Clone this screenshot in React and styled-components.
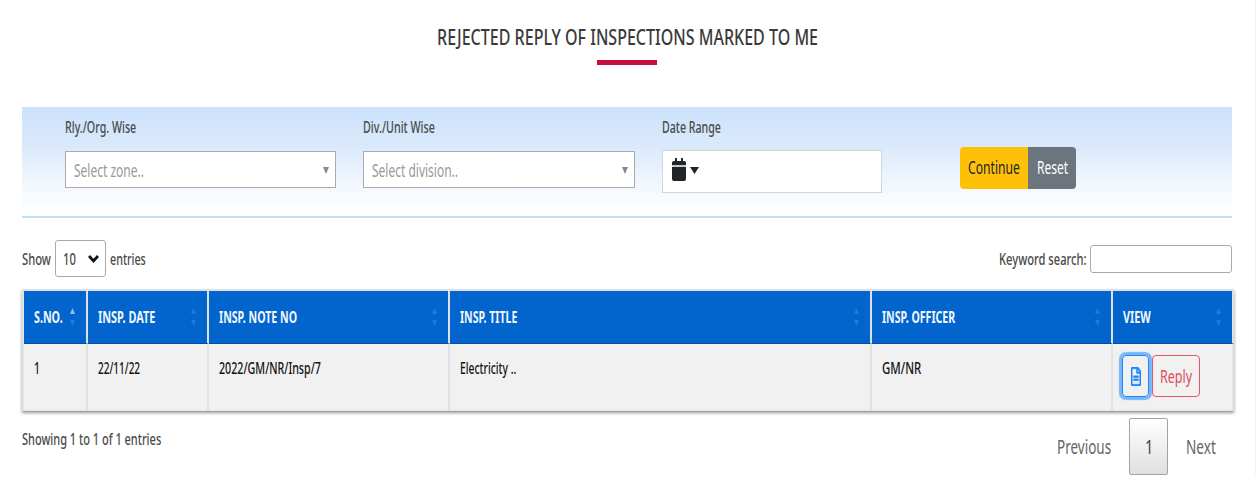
import React, { useLayoutEffect, useRef, useState } from "react";
import styled, { createGlobalStyle } from "styled-components";
import { FaCalendar, FaRegFileAlt } from "react-icons/fa";

const Global = createGlobalStyle`
  *, *::before, *::after { box-sizing: border-box; }
  body {
    margin: 0;
    background: #fff;
    font-family: "Noto Sans", "Open Sans", sans-serif;
  }
  button { font-family: inherit; padding: 0; cursor: pointer; }
`;

/* Condensed text: the glyphs are scaled to fill a fixed width. */
const TextBox = styled.span`
  display: inline-block;
  flex: none;
  width: ${(p) => p.$width}px;
  height: ${(p) => p.$size + 6}px;
  line-height: ${(p) => p.$size + 6}px;
  font-size: ${(p) => p.$size}px;
  font-weight: ${(p) => p.$weight};
  color: ${(p) => p.$color};
  white-space: nowrap;
  text-align: left;
`;
const TextInk = styled.span`
  display: inline-block;
  transform-origin: 0 50%;
`;

function Text({ width, size = 15.5, weight = 500, color = "#4a4a4a", children }) {
  const ref = useRef(null);
  const [scale, setScale] = useState(1);
  useLayoutEffect(() => {
    setScale(width / ref.current.offsetWidth);
  }, [width, size, weight, children]);
  return (
    <TextBox $width={width} $size={size} $weight={weight} $color={color}>
      <TextInk ref={ref} style={{ transform: `scaleX(${scale})` }}>
        {children}
      </TextInk>
    </TextBox>
  );
}

const Page = styled.main`
  width: 1256px;
  height: 475px;
  padding: 22px 21px 0 22px;
  border-right: 1px solid #f4f4f4;
`;
const Heading = styled.h1`
  margin: 0;
  height: 85px;
  width: 1210px;
  display: flex;
  flex-direction: column;
  align-items: center;
  font-size: 22px;
  line-height: 0;
  &::after {
    content: "";
    width: 60px;
    height: 5px;
    margin-top: 10px;
    background: #c60f3c;
  }
`;
const Filters = styled.section`
  width: 1210px;
  height: 111px;
  display: flex;
  align-items: flex-start;
  padding: 10px 0 0 43px;
  border-bottom: 2px solid #c2e1f7;
  background: linear-gradient(#cce2fd 0%, #dbeafb 38%, #f3f8fe 72%, #fff 100%);
`;
const Field = styled.div`
  width: ${(p) => p.$width}px;
  margin-right: ${(p) => p.$gap}px;
  display: flex;
  flex-direction: column;
  gap: ${(p) => p.$space}px;
`;
const SelectBox = styled.div`
  height: 37px;
  display: flex;
  align-items: center;
  justify-content: space-between;
  padding: 2px 6px 0 8px;
  background: #fff;
  border: 1.5px solid #aaa;
`;
const DateBox = styled.div`
  height: 43px;
  display: flex;
  align-items: flex-start;
  gap: 4px;
  padding: 7px 9px;
  background: #fff;
  border: 1px solid #d3d6d9;
`;
const CalendarIcon = styled(FaCalendar)`
  width: 14px;
  height: 23px;
  color: #212529;
`;
const Triangle = styled.svg`
  display: block;
  flex: none;
  width: ${(p) => p.$w}px;
  height: ${(p) => p.$h}px;
  margin-top: ${(p) => p.$top || 0}px;
  fill: ${(p) => p.$color};
`;
const Down = (props) => (
  <Triangle viewBox="0 0 10 10" preserveAspectRatio="none" {...props}>
    <path d="M0 0h10L5 10z" />
  </Triangle>
);
const Up = (props) => (
  <Triangle viewBox="0 0 10 10" preserveAspectRatio="none" {...props}>
    <path d="M0 10h10L5 0z" />
  </Triangle>
);
const ButtonGroup = styled.div`
  display: flex;
  margin: 30px 0 0 0;
  border-radius: 4px;
  overflow: hidden;
`;
const Action = styled.button`
  width: ${(p) => p.$width}px;
  height: 42px;
  border: 0;
  display: flex;
  align-items: center;
  justify-content: center;
  background: ${(p) => p.$bg};
`;

const Toolbar = styled.div`
  width: 1210px;
  height: 71px;
  display: flex;
  justify-content: space-between;
  padding-top: 22px;
`;
const ToolGroup = styled.label`
  height: 37px;
  display: flex;
  align-items: center;
  gap: ${(p) => p.$gap}px;
  ${TextBox} { margin-top: 2px; }
`;
const LengthSelect = styled.span`
  width: 51px;
  height: 37px;
  display: flex;
  align-items: center;
  justify-content: space-between;
  padding: 0 6px 0 7px;
  border: 1px solid #aaa;
  border-radius: 3px;
  background: #fff;
`;
const Chevron = styled.svg`
  width: 11px;
  height: 10px;
  fill: none;
  stroke: #111;
  stroke-width: 2.8;
`;
const SearchInput = styled.input`
  width: 142px;
  height: 28px;
  padding: 0 4px;
  border: 1px solid #aaa;
  border-radius: 3px;
  background: #fff;
`;

const Table = styled.div`
  width: 1212px;
  height: 122px;
  border: solid #dee2e6;
  border-width: 2px 0 1px 2px;
  box-shadow: 0 2px 3px rgba(0, 0, 0, 0.42);
`;
const Row = styled.div`
  display: grid;
  grid-template-columns: 64px 121px 241px 422px 241px 121px;
`;
const HeadCell = styled.div`
  height: 53px;
  display: flex;
  align-items: center;
  justify-content: space-between;
  padding: 1px 11px 0 10px;
  background: #0165cd;
  border-right: 2px solid #dee2e6;
  border-bottom: 1px solid #0b4f9b;
`;
const Sort = styled.span`
  display: flex;
  flex-direction: column;
  gap: 6px;
  margin-top: -1px;
`;
const Cell = styled.div`
  height: 66px;
  display: flex;
  align-items: flex-start;
  padding: ${(p) => (p.$actions ? "11px 0 0 9px" : "14px 0 0 10px")};
  gap: 3px;
  background: #f1f1f1;
  border-right: 2px solid #dee2e6;
`;
const OutlineButton = styled.button`
  width: ${(p) => p.$width}px;
  height: 42px;
  display: flex;
  align-items: center;
  justify-content: center;
  background: transparent;
  border: 1.5px solid ${(p) => p.$color};
  border-radius: 4px;
  box-shadow: ${(p) => (p.$focus ? "0 0 1px 3px rgba(0,123,255,.5)" : "none")};
`;
const FileIcon = styled(FaRegFileAlt)`
  width: 10px;
  height: 19px;
  color: #1a86ff;
  stroke-width: 14;
`;

const Footer = styled.footer`
  width: 1210px;
  display: flex;
  justify-content: space-between;
  align-items: flex-start;
  padding-top: 7px;
`;
const Info = styled.div`
  padding-top: 11px;
  display: flex;
`;
const Pager = styled.nav`
  height: 57px;
  display: flex;
  align-items: center;
  padding-right: 16px;
  gap: 18px;
`;
const PageNumber = styled.button`
  width: 39px;
  height: 57px;
  display: flex;
  align-items: center;
  justify-content: center;
  border: 1px solid #a3a3a3;
  border-radius: 2px;
  background: linear-gradient(#fff, #e0e0e0);
`;

const columns = [
  { title: "S.NO.", width: 29, value: "1", valueWidth: 6 },
  { title: "INSP. DATE", width: 57, value: "22/11/22", valueWidth: 42 },
  { title: "INSP. NOTE NO", width: 78, value: "2022/GM/NR/Insp/7", valueWidth: 102 },
  { title: "INSP. TITLE", width: 57, value: "Electricity ..", valueWidth: 56 },
  { title: "INSP. OFFICER", width: 73, value: "GM/NR", valueWidth: 39 },
  { title: "VIEW", width: 28 },
];

export default function App() {
  return (
    <>
      <Global />
      <Page>
        <Heading>
          <Text width={381} size={22} weight={500} color="#3a3a3a">
            REJECTED REPLY OF INSPECTIONS MARKED TO ME
          </Text>
        </Heading>
        <Filters>
          <Field $width={271} $gap={27} $space={12}>
            <Text width={71}>Rly./Org. Wise</Text>
            <SelectBox>
              <Text width={70} size={18} weight={400} color="#999">Select zone..</Text>
              <Down $w={6} $h={7} $color="#888" />
            </SelectBox>
          </Field>
          <Field $width={272} $gap={27} $space={12}>
            <Text width={72}>Div./Unit Wise</Text>
            <SelectBox>
              <Text width={86} size={18} weight={400} color="#999">Select division..</Text>
              <Down $w={6} $h={7} $color="#888" />
            </SelectBox>
          </Field>
          <Field $width={220} $gap={78} $space={11}>
            <Text width={59}>Date Range</Text>
            <DateBox>
              <CalendarIcon preserveAspectRatio="none" />
              <Down $w={9} $h={7} $top={9} $color="#212529" />
            </DateBox>
          </Field>
          <ButtonGroup>
            <Action $width={68} $bg="#ffc107">
              <Text width={52} size={17.5} weight={400} color="#212529">Continue</Text>
            </Action>
            <Action $width={48} $bg="#6c757d">
              <Text width={31} size={17.5} weight={400} color="#fff">Reset</Text>
            </Action>
          </ButtonGroup>
        </Filters>
        <Toolbar>
          <ToolGroup $gap={4}>
            <Text width={29}>Show</Text>
            <LengthSelect>
              <Text width={13}>10</Text>
              <Chevron viewBox="0 0 11 10" preserveAspectRatio="none">
                <path d="M1 2l4.500 5L10 2" />
              </Chevron>
            </LengthSelect>
            <Text width={36}>entries</Text>
          </ToolGroup>
          <ToolGroup $gap={3}>
            <Text width={88}>Keyword search:</Text>
            <SearchInput />
          </ToolGroup>
        </Toolbar>
        <Table>
          <Row>
            {columns.map((c, i) => (
              <HeadCell key={c.title}>
                <Text width={c.width} weight={700} color="#f2f7fd">{c.title}</Text>
                <Sort>
                  <Up $w={5} $h={6} $color={i === 0 ? "#8fbdec" : "#237bd4"} />
                  <Down $w={5} $h={6} $color="#237bd4" />
                </Sort>
              </HeadCell>
            ))}
          </Row>
          <Row>
            {columns.map((c) =>
              c.value ? (
                <Cell key={c.title}>
                  <Text width={c.valueWidth} color="#111">{c.value}</Text>
                </Cell>
              ) : (
                <Cell key={c.title} $actions>
                  <OutlineButton $width={27} $color="#1a86ff" $focus>
                    <FileIcon preserveAspectRatio="none" />
                  </OutlineButton>
                  <OutlineButton $width={48} $color="#e25563">
                    <Text width={32} size={18} weight={400} color="#e04b5a">Reply</Text>
                  </OutlineButton>
                </Cell>
              )
            )}
          </Row>
        </Table>
        <Footer>
          <Info>
            <Text width={139}>Showing 1 to 1 of 1 entries</Text>
          </Info>
          <Pager>
            <Text width={54} size={20} weight={400} color="#666">Previous</Text>
            <PageNumber>
              <Text width={8} size={20} weight={400} color="#444">1</Text>
            </PageNumber>
            <Text width={30} size={20} weight={400} color="#666">Next</Text>
          </Pager>
        </Footer>
      </Page>
    </>
  );
}
